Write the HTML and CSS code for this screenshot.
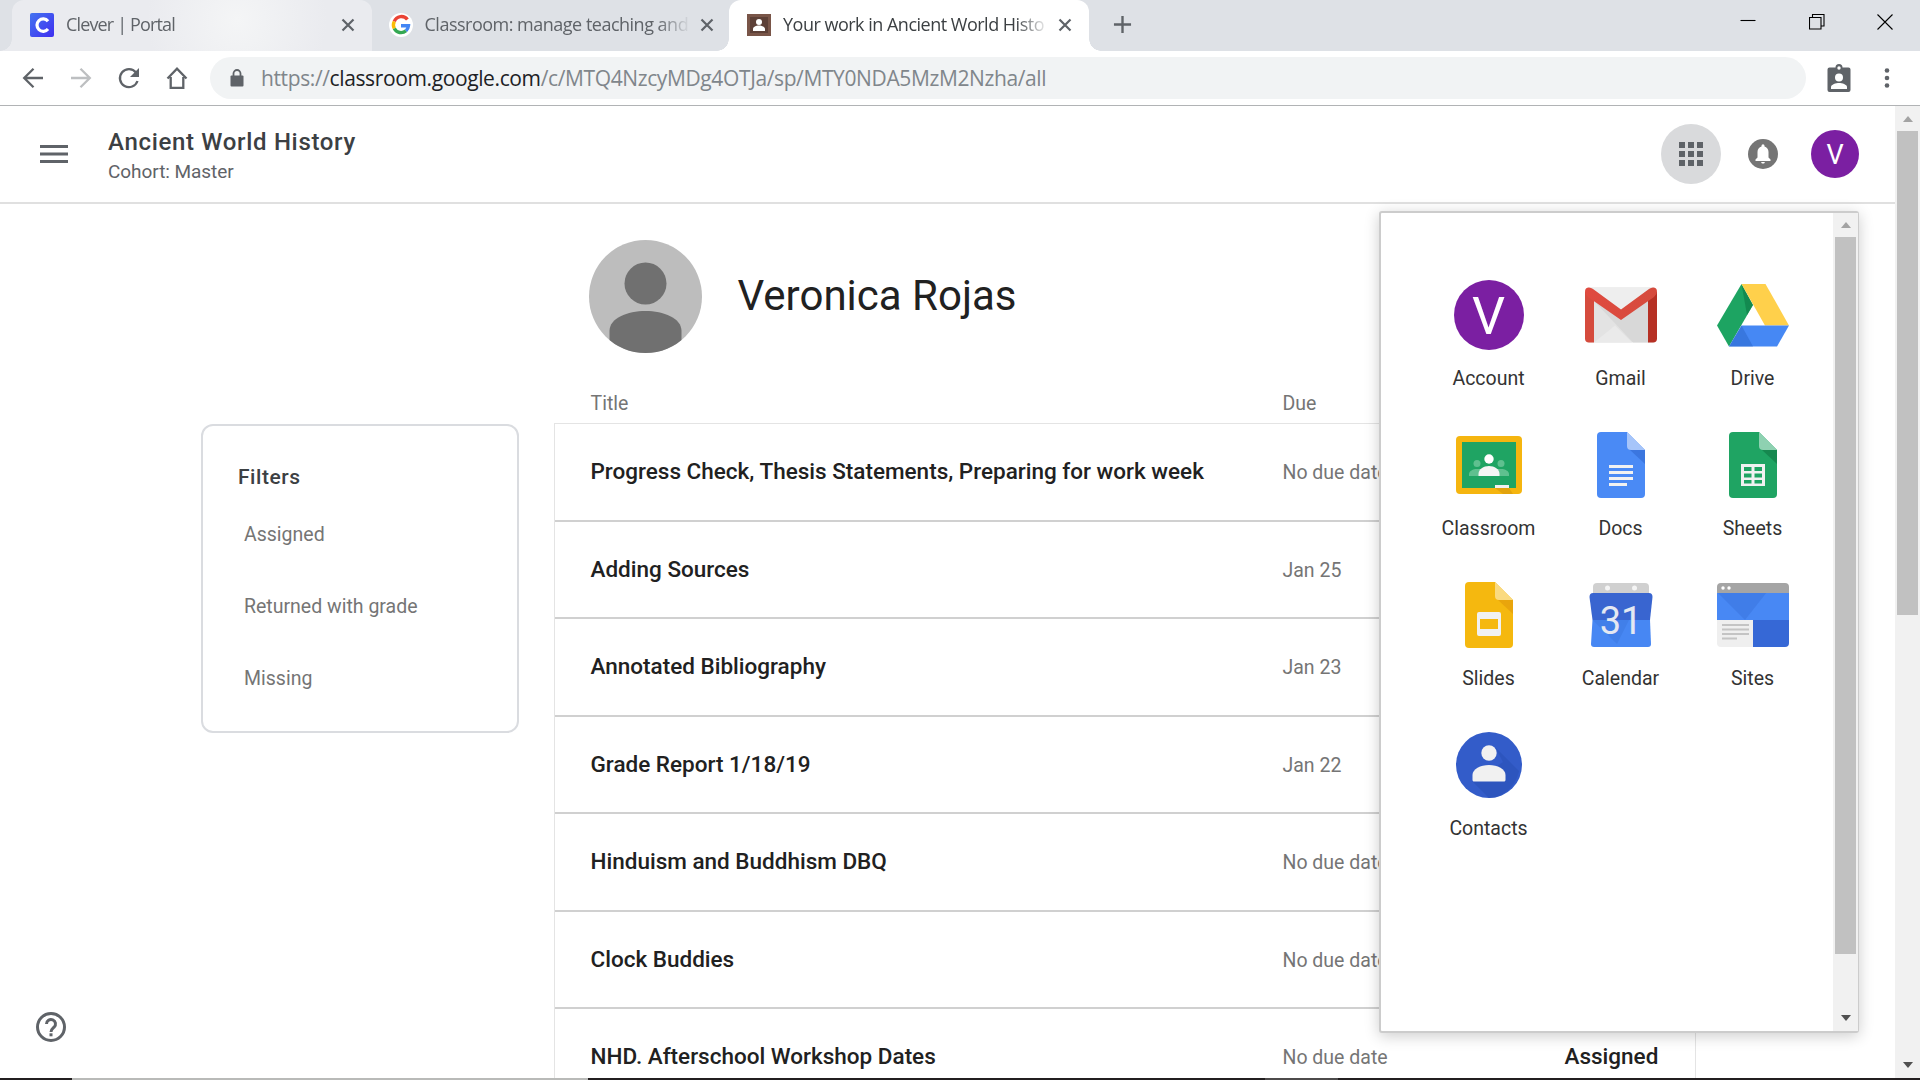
FILE: index.html
```html
<!DOCTYPE html>
<html lang="en">
<head>
<meta charset="utf-8">
<title>Your work in Ancient World History</title>
<link rel="stylesheet" href="styles.css">
</head>
<body>
<div class="tabstrip">
  <div class="tab tab-glow">
    <svg class="favicon" viewBox="0 0 24 24"><defs><linearGradient id="cl" x1="0" y1="0" x2="1" y2="1"><stop offset="0" stop-color="#4374f0"/><stop offset="1" stop-color="#3f2ef0"/></linearGradient></defs><rect width="24" height="24" rx="2" fill="url(#cl)"/><path d="M18 8.200A6.200 6.200 0 1 0 18 16" fill="none" stroke="#fff" stroke-width="3.200"/></svg>
    <span class="tab-title t-clever">Clever | Portal</span>
    <svg class="close" viewBox="0 0 14 14"><path d="M1.500 1.500l11 11M12.500 1.500l-11 11"/></svg>
  </div>
  <div class="tab">
    <svg class="favicon" viewBox="0 0 24 24"><circle cx="12" cy="12" r="12" fill="#fff"/><g fill="none" stroke-width="3.400"><path d="M18.400 6.600A7.500 7.500 0 0 0 5.300 8.500" stroke="#ea4335"/><path d="M5.300 8.500a7.500 7.500 0 0 0 0 7" stroke="#fbbc05"/><path d="M5.300 15.500a7.500 7.500 0 0 0 11.700 2.200" stroke="#34a853"/><path d="M17 17.700a7.500 7.500 0 0 0 2.500-5H12" stroke="#4285f4"/></g></svg>
    <span class="tab-title t-google">Classroom: manage teaching and</span>
    <svg class="close" viewBox="0 0 14 14"><path d="M1.500 1.500l11 11M12.500 1.500l-11 11"/></svg>
  </div>
  <div class="tab active">
    <svg class="favicon" viewBox="0 0 24 24"><rect y="1" width="24" height="22" fill="#795548"/><rect x="3" y="4" width="18" height="16" fill="#5d4037"/><circle cx="12" cy="9" r="3" fill="#fff"/><path d="M6 18v-2c0-2 3-3.500 6-3.500s6 1.500 6 3.500v2z" fill="#fff"/></svg>
    <span class="tab-title t-work">Your work in Ancient World Histo</span>
    <svg class="close" viewBox="0 0 14 14"><path d="M1.500 1.500l11 11M12.500 1.500l-11 11"/></svg>
  </div>
  <svg class="newtab" viewBox="0 0 20 20"><path d="M10 1v18M1 10h18"/></svg>
  <div class="winctl">
    <svg viewBox="0 0 16 16"><path d="M0.500 6.500h15"/></svg>
    <svg viewBox="0 0 16 16"><path d="M.5 3.500h11.500v11.500H.5zM3.500 3.500v-3h11.500v11.500h-3"/></svg>
    <svg viewBox="0 0 16 16"><path d="M.5.5l15 15M15.500.5l-15 15"/></svg>
  </div>
</div>
<div class="toolbar">
  <svg class="nav" viewBox="0 0 24 24"><path d="M22 12H3.500M12.500 2.700L3.200 12l9.300 9.300"/></svg>
  <svg class="nav dim" viewBox="0 0 24 24"><path d="M2 12H20.500M11.500 2.700l9.300 9.300-9.300 9.300"/></svg>
  <svg class="nav" viewBox="0 0 24 24"><path d="M19 6.500A9 9 0 1 0 20.500 15"/><path class="solid" d="M22 2v9h-9z"/></svg>
  <svg class="nav" viewBox="0 0 24 24"><path d="M2.500 12.500L12 2.700l9.500 9.800M5.700 11v10.800h12.600V11"/></svg>
  <div class="omnibox">
    <svg class="lock" viewBox="0 0 14 18"><path d="M1.500 6.500h11q1 0 1 1V16.500q0 1-1 1h-11q-1 0-1-1v-9q0-1 1-1z" fill="#5f6368"/><path d="M3.500 8V4.500a3.500 3.500 0 0 1 7 0V8" fill="none" stroke="#5f6368" stroke-width="1.800"/></svg>
    <span class="url">https://<b>classroom.google.com</b>/c/MTQ4NzcyMDg4OTJa/sp/MTY0NDA5MzM2Nzha/all</span>
  </div>
  <svg class="badge" viewBox="0 0 24 28"><path fill="#5f6368" d="M2.500 3.500h6a3.500 3.500 0 0 1 7 0h6q2 0 2 2V26q0 2-2 2h-19q-2 0-2-2V5.500q0-2 2-2z"/><circle cx="12" cy="4" r="1.700" fill="#fff"/><circle cx="12" cy="13.500" r="4" fill="#fff"/><path fill="#fff" d="M4 25v-2c0-2.500 5-4 8-4s8 1.500 8 4v2z"/></svg>
  <svg class="dots" viewBox="0 0 6 20"><circle cx="3" cy="2.500" r="2.300"/><circle cx="3" cy="10" r="2.300"/><circle cx="3" cy="17.500" r="2.300"/></svg>
</div>
<div class="viewport">
  <div class="page">
    <header class="header">
      <svg class="menu" viewBox="0 0 28 18"><path d="M0 1.500h28M0 9h28M0 16.500h28"/></svg>
      <div class="course"><div class="course-name">Ancient World History</div><div class="cohort">Cohort: Master</div></div>
      <div class="apps-btn"><svg viewBox="0 0 24 24"><path d="M0 0h6v6H0zM9 0h6v6H9zM18 0h6v6h-6zM0 9h6v6H0zM9 9h6v6H9zM18 9h6v6h-6zM0 18h6v6H0zM9 18h6v6H9zM18 18h6v6h-6z"/></svg></div>
      <svg class="bell" viewBox="0 0 30 30"><circle cx="15" cy="15" r="15" fill="#757575"/><path fill="#fff" d="M7.500 22v-1.500l2-2V13c0-3 1.700-5 4-5.600V6.700a1.500 1.500 0 0 1 3 0v.7c2.300.6 4 2.600 4 5.600v5.500l2 2V22zM13.200 23h3.600c0 1-.8 1.600-1.800 1.600s-1.800-.6-1.800-1.600z"/></svg>
      <div class="avatar">V</div>
    </header>
    <main class="content">
      <aside class="side">
        <section class="filters">
          <h2>Filters</h2>
          <a>Assigned</a><a>Returned with grade</a><a>Missing</a>
        </section>
        <svg class="help" viewBox="0 0 30 30"><circle cx="15" cy="15" r="13.500"/><path d="M10.500 12a4.500 4.500 0 1 1 7.600 3.200c-1.700 1.600-3.100 2.300-3.100 4.800"/><path d="M15 21.300v3"/></svg>
      </aside>
      <div class="work">
        <div class="student">
          <svg viewBox="0 0 113 113"><defs><clipPath id="pc"><circle cx="56.500" cy="56.500" r="56.500"/></clipPath></defs><g clip-path="url(#pc)"><rect width="113" height="113" fill="#bdbdbd"/><circle cx="56.500" cy="43.500" r="21" fill="#707070"/><path fill="#707070" d="M20.500 113V91c0-13 18-20 36-20s36 7 36 20v22z"/></g></svg>
          <h1>Veronica Rojas</h1>
        </div>
        <div class="cols"><span>Title</span><span>Due</span></div>
        <div class="table">
          <div class="row"><b>Progress Check, Thesis Statements, Preparing for work week</b><span>No due date</span></div>
          <div class="row"><b>Adding Sources</b><span>Jan 25</span></div>
          <div class="row"><b>Annotated Bibliography</b><span>Jan 23</span></div>
          <div class="row"><b>Grade Report 1/18/19</b><span>Jan 22</span></div>
          <div class="row"><b>Hinduism and Buddhism DBQ</b><span>No due date</span></div>
          <div class="row"><b>Clock Buddies</b><span>No due date</span></div>
          <div class="row"><b>NHD. Afterschool Workshop Dates</b><span>No due date</span><b class="status">Assigned</b></div>
        </div>
      </div>
    </main>
  </div>
  <div class="scroll page-scroll"><i class="up"></i><i class="thumb"></i><i class="down"></i></div>
  <div class="launcher">
    <div class="apps">
      <div class="app"><div class="account">V</div><span>Account</span></div>
      <div class="app"><svg viewBox="0 0 72 72"><defs><linearGradient id="rd" x1="0" x2="1"><stop offset="0" stop-color="#e04a3f"/><stop offset="1" stop-color="#d54b3d"/></linearGradient></defs><path fill="#e3e3e3" d="M3 8.500h66V63.500H3z"/><path fill="#eee" d="M6 8.500h60L36 31z"/><path fill="#d0d0d0" d="M9 22L48 63.500H64V20L36 39z" opacity=".6"/><path fill="#eaeaea" d="M9 63.500l21-17 17 17z"/><path fill="#d54b3d" d="M0 13h9v50.500H4q-4 0-4-4z"/><path fill="#b63024" d="M63 13h9v46.500q0 4-4 4h-5z"/><path fill="url(#rd)" d="M0 12.500q0-4 4-4 2 0 4 1.500L36 30.500 64 10Q66 8.500 68 8.500q4 0 4 4 0 3-3 5.500L36 41 3 18Q0 15.500 0 12.500z"/></svg><span>Gmail</span></div>
      <div class="app"><svg viewBox="0 0 72 72"><path fill="#1da462" d="M24.500 5L0 46.500 12 67.500 36 26z"/><path fill="#0f7f49" d="M24.500 5L36 26l-6 10z" opacity=".7"/><path fill="#ffd04b" d="M24.500 5h24L72 46.500H48z"/><path fill="#4688f4" d="M24.500 46.500H72L60 67.500H12z"/><path fill="#2a66c9" d="M24.500 46.500L36 67.500H12z" opacity=".5"/></svg><span>Drive</span></div>
      <div class="app"><svg viewBox="0 0 72 72"><rect x="3" y="7" width="66" height="58" rx="4" fill="#f5b50f"/><rect x="9" y="13" width="54" height="46" fill="#1fa463"/><g fill="#5fc08f"><circle cx="24" cy="34.500" r="3.500"/><circle cx="48" cy="34.500" r="3.500"/><path d="M16 47v-2c0-3 4-5 8-5h24c4 0 8 2 8 5v2z"/></g><circle cx="36" cy="30" r="4.700" fill="#fff"/><path fill="#f5f5f5" d="M25.500 47v-2c0-5 5-8 10.500-8s10.500 3 10.500 8v2z"/><path fill="#e2a30c" d="M42 59h14l4 6H50z"/><path fill="#f1f1f1" d="M42 56h14v3H42z"/></svg><span>Classroom</span></div>
      <div class="app"><svg viewBox="0 0 72 72"><path fill="#4a8af5" d="M16 3h26l18 18v44q0 4-4 4H16q-4 0-4-4V7q0-4 4-4z"/><path fill="#3b76df" d="M44 20l16 15V21z"/><path fill="#a6c5fa" d="M42 3l18 18H46q-4 0-4-4z"/><path fill="#f1f1f1" d="M24 36h24v3H24zM24 42h24v3H24zM24 48h24v3H24zM24 54h18v3H24z"/></svg><span>Docs</span></div>
      <div class="app"><svg viewBox="0 0 72 72"><path fill="#1fa463" d="M16 3h26l18 18v44q0 4-4 4H16q-4 0-4-4V7q0-4 4-4z"/><path fill="#16884f" d="M44 20l16 15V21z"/><path fill="#8ed1b1" d="M42 3l18 18H46q-4 0-4-4z"/><path fill="#f1f1f1" fill-rule="evenodd" d="M24 35h24v22H24zM27 38v4h7.500v-4zM37.500 38v4H45v-4zM27 44.500v4h7.500v-4zM37.500 44.500v4H45v-4zM27 51v3.500h7.500V51zM37.500 51v3.500H45V51z"/></svg><span>Sheets</span></div>
      <div class="app"><svg viewBox="0 0 72 72"><path fill="#f5b80f" d="M16 3h26l18 18v44q0 4-4 4H16q-4 0-4-4V7q0-4 4-4z"/><path fill="#e9a50c" d="M44 20l16 15V21z"/><path fill="#fada80" d="M42 3l18 18H46q-4 0-4-4z"/><path fill="#f1f1f1" fill-rule="evenodd" d="M26 33h20q2 0 2 2v20q0 2-2 2H26q-2 0-2-2V35q0-2 2-2zM27 40v10h18V40z"/></svg><span>Slides</span></div>
      <div class="app"><svg viewBox="0 0 72 72"><rect x="8" y="4" width="56" height="16" rx="4" fill="#d0d0d0"/><circle cx="22.500" cy="9" r="2.500" fill="#f5f5f5"/><circle cx="49.500" cy="9" r="2.500" fill="#f5f5f5"/><path fill="#3965d0" d="M8 14h56q3.500 0 3.500 4L65 41H7.500L4.500 18q0-4 3.500-4z"/><path fill="#4787f3" d="M7.500 41H65l1 24q0 3-3 3H9q-3 0-3-3z"/><path fill="#3c77e0" d="M7.500 41H44l-12 24z" opacity=".5"/><text class="cal-day" x="36" y="55">31</text></svg><span>Calendar</span></div>
      <div class="app"><svg viewBox="0 0 72 72"><path fill="#4888f4" d="M0 13h72v28H0z"/><path fill="#3d79e2" d="M0 13h50L28 41z" opacity=".7"/><path fill="#a5a5a5" d="M4 4h64q4 0 4 4v6H0V8q0-4 4-4z"/><circle cx="6" cy="9" r="1.700" fill="#fff"/><circle cx="12" cy="9" r="1.700" fill="#fff"/><path fill="#efefef" d="M0 41h36v27H4q-4 0-4-4z"/><path fill="#3668d6" d="M36 41h36v23q0 4-4 4H36z"/><path fill="#c4c4c4" d="M5 45h27v2H5zM5 49.500h27v2H5zM5 54h27v2H5zM5 58.500h15v2H5z"/></svg><span>Sites</span></div>
      <div class="app"><svg viewBox="0 0 72 72"><circle cx="36" cy="36" r="33" fill="#335cc9"/><path fill="#2a50b8" d="M42 18l24 24c-3 15-16 27-30 27L20 53l30-20z" opacity=".6"/><circle cx="36" cy="24" r="7.700" fill="#f1f1f1"/><path fill="#f1f1f1" d="M19.500 50.500q0 2 1 2h31q1 0 1-2V46c0-6-8-10-16.500-10s-16.500 4-16.500 10z"/></svg><span>Contacts</span></div>
    </div>
    <div class="scroll inner-scroll"><i class="up"></i><i class="thumb"></i><i class="down"></i></div>
  </div>
</div>
<div class="taskbar"><i class="s1"></i><i class="s2"></i><i class="s3"></i><i class="s4"></i></div>
</body>
</html>
```
FILE: styles.css
```css
* { box-sizing: border-box; }
body {
  margin: 0;
  width: 1920px;
  height: 1080px;
  overflow: hidden;
  background: #fff;
  font-family: Roboto, "Liberation Sans", sans-serif;
  display: flex;
  flex-direction: column;
}
svg { display: block; flex: none; }

/* browser chrome */
.tabstrip {
  height: 51px;
  flex: none;
  display: flex;
  align-items: flex-start;
  padding-left: 12px;
  background: #dee1e6;
  font-family: "Open Sans", "Noto Sans", sans-serif;
}
.tab {
  position: relative;
  width: 360px;
  height: 51px;
  display: flex;
  align-items: center;
  padding: 0 0 2px 18px;
  border-radius: 12px 12px 0 0;
  color: #5f6368;
}
.tab + .tab { margin-left: -1.500px; }
.tab-glow { background: radial-gradient(circle 90px at 225px 20px, #f4f5f6, #eaebef); }
.tab.active { background: #fff; color: #3c4043; }
/* outward curves at the foot of a raised tab */
.tab-glow::before, .active::before, .active::after {
  content: "";
  position: absolute;
  bottom: 0;
  width: 12px;
  height: 12px;
}
.tab-glow::before { left: -12px; background: radial-gradient(circle at 0 0, transparent 11.500px, #eaebef 12px); }
.active::before { left: -12px; background: radial-gradient(circle at 0 0, transparent 11.500px, #fff 12px); }
.active::after { right: -12px; background: radial-gradient(circle at 100% 0, transparent 11.500px, #fff 12px); }
.favicon { width: 24px; height: 24px; margin-right: 12px; }
.tab-title {
  width: 265px;
  font-size: 18px;
  line-height: 26px;
  padding-bottom: 1px;
  white-space: nowrap;
  -webkit-mask-image: linear-gradient(90deg, #000 232px, transparent 266px);
}
.t-clever { letter-spacing: -.85px; }
.t-google { letter-spacing: -.5px; }
.t-work { letter-spacing: -.5px; }
.close { width: 14px; height: 14px; margin-left: 10px; fill: none; stroke: #5f6368; stroke-width: 2.200; }
.newtab { width: 19px; height: 19px; margin: 15px 0 0 24px; fill: none; stroke: #5f6368; stroke-width: 2.500; }
.winctl { margin-left: auto; display: flex; gap: 52.500px; padding: 14px 27px 0 0; }
.winctl svg { width: 16px; height: 16px; fill: none; stroke: #000; stroke-width: 1.100; }
.toolbar {
  height: 55px;
  flex: none;
  display: flex;
  align-items: center;
  gap: 24px;
  padding: 0 30px 0 21px;
  border-bottom: 1px solid #b1b3b5;
}
.nav { width: 24px; height: 24px; fill: none; stroke: #5f6368; stroke-width: 2.300; }
.nav .solid { fill: #5f6368; stroke: none; }
.dim { stroke: #bdbfc1; }
.omnibox {
  width: 1596px;
  height: 42px;
  border-radius: 21px;
  background: #f1f3f4;
  display: flex;
  align-items: center;
  padding-left: 20px;
  margin-left: -3px;
}
.lock { width: 14px; height: 18px; margin-right: 17px; }
.url { font: 21px/30px "Open Sans", "Noto Sans", sans-serif; color: #80868b; white-space: nowrap; letter-spacing: -.38px; }
.url b { font-weight: 400; color: #202124; }
.badge { width: 24px; height: 28px; margin: 0 9px 0 -3px; }
.dots { width: 6px; height: 20px; fill: #5f6368; }

/* page */
.viewport { position: relative; height: 972px; flex: none; display: flex; }
.page { width: 1895px; display: flex; flex-direction: column; overflow: hidden; }
.header {
  height: 98px;
  flex: none;
  display: flex;
  align-items: center;
  padding: 0 36px 0 40px;
  border-bottom: 2px solid #e0e0e0;
}
.menu { width: 28px; height: 18px; stroke: #5f6368; stroke-width: 3; }
.course { margin: 0 auto 0 40px; padding-top: 5px; }
.course-name { font-size: 24px; line-height: 30px; font-weight: 500; color: #3c4043; letter-spacing: .68px; }
.cohort { font-size: 19px; line-height: 29px; color: #5f6368; letter-spacing: -.05px; }
.apps-btn { width: 60px; height: 60px; border-radius: 50%; background: #d9dadc; display: grid; place-items: center; }
.apps-btn svg { width: 24px; height: 24px; fill: #5f6368; }
.bell { width: 30px; height: 30px; margin: 0 33px 0 27px; }
.avatar, .account { border-radius: 50%; background: #7b1fa2; color: #fff; display: grid; place-items: center; }
.avatar { width: 48px; height: 48px; font-size: 27px; padding-top: 2px; }
.content { display: flex; flex: 1; }
.side { width: 554px; height: 868px; flex: none; display: flex; flex-direction: column; justify-content: space-between; padding: 220px 35px 30px 36px; align-items: flex-start; }
.filters {
  width: 318px;
  height: 309px;
  margin-left: 165px;
  border: 2px solid #dadce0;
  border-radius: 12px;
  padding: 35px 0 0 41px;
  font-size: 19.500px;
  color: #757575;
}
.filters h2 { margin: 0 0 6px -6px; font-size: 21px; line-height: 32px; font-weight: 500; color: #3c4043; letter-spacing: .55px; }
.filters a { display: block; height: 72px; line-height: 72px; }
.filters h2 + a { margin-top: -9px; padding-top: 0; }
.filters h2 { margin-bottom: 0; }
.help { width: 30px; height: 30px; fill: none; stroke: #5f6368; stroke-width: 3; }
.work { width: 1142px; }
.student { display: flex; align-items: center; padding: 36px 0 0 34.500px; }
.student svg { width: 113px; height: 113px; }
.student h1 { margin: -2px 0 0 36px; font-size: 42px; font-weight: 400; line-height: 50px; color: #212121; }
.cols, .row { display: grid; grid-template-columns: 692px 282px auto; padding-left: 36.500px; }
.cols { height: 70px; padding-top: 38px; line-height: 26px; font-size: 19.500px; color: #757575; }
.table { border: 1px solid #e4e4e4; border-bottom: 0; }
.row { height: 97.500px; padding-left: 35.500px; border-bottom: 2px solid #d0d0d0; align-items: center; font-size: 19.500px; color: #757575; }
.row span { padding-top: 2px; }
.row b { padding-bottom: 1.500px; font-size: 22.500px; font-weight: 500; color: #212121; white-space: nowrap; }
.filters h2 + a { margin-top: 6px; }

/* scrollbars */
.scroll { width: 25px; background: #f1f1f1; display: flex; flex-direction: column; align-items: center; }
.scroll .thumb { width: 21px; background: #c1c1c1; }
.up, .down { border: 5.500px solid transparent; }
.up { border-bottom: 6px solid #a3a3a3; border-top: 0; margin: 10px 0 9px; }
.down { border-top: 6px solid #505050; border-bottom: 0; margin-top: auto; margin-bottom: 10px; }
.page-scroll .thumb { height: 484px; }
.inner-scroll .up { margin: 9px 0; }
.inner-scroll .thumb { height: 717px; }

/* launcher overlay */
.launcher {
  position: absolute;
  left: 1379px;
  top: 105px;
  width: 480px;
  height: 822px;
  background: #fff;
  border: 2px solid #ccc;
  border-right-width: 1px;
  border-radius: 3px;
  box-shadow: 0 3px 15px rgba(0, 0, 0, .2);
  display: flex;
  justify-content: space-between;
}
.apps { display: grid; grid-template-columns: repeat(3, 132px); grid-auto-rows: 150px; padding: 57px 0 0 41.500px; }
.app { display: flex; flex-direction: column; align-items: center; padding-top: 9px; font-size: 19.500px; line-height: 24px; color: #333; }
.app svg { width: 72px; height: 72px; margin-bottom: 16px; }
.account { width: 70px; height: 70px; margin: 1px 0 17px; font-size: 52px; line-height: 70px; padding-top: 2px; }
.cal-day { font-family: Roboto, sans-serif; font-size: 38px; fill: #e4e8f2; text-anchor: middle; }

/* strip along the bottom edge */
.taskbar { height: 2px; display: flex; background: #b9bab8; }
.taskbar i { background: #231f20; height: 2px; }
.s1 { width: 72px; }
.s2 { width: 677px; margin-left: 516px; }
.taskbar .s3 { width: 73px; background: #4d4b4b; }
.s4 { width: 582px; }
```
